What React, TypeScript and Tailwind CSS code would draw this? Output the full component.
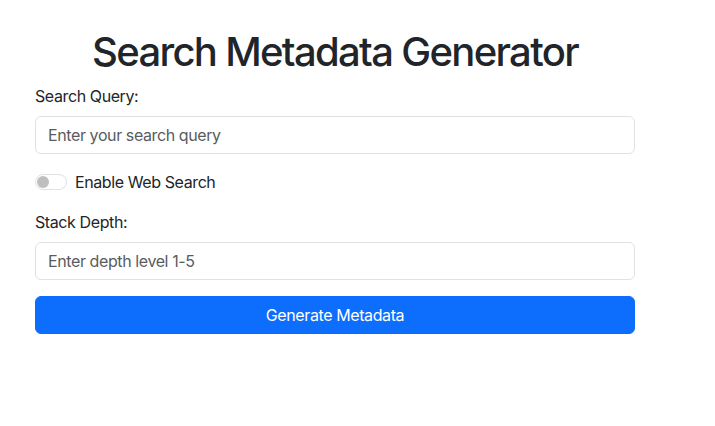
import React from "react";

export default function App() {
  return (
    <div className="min-h-screen bg-white text-[#212529] tracking-[-0.025em]" style={{ fontFamily: "Inter, 'Noto Sans', sans-serif" }}>
      <div className="ml-[35px] w-[600px] pt-[28px]">
        <h1 className="mb-2 text-center text-[40px] font-medium leading-[48px] tracking-[-0.042em]">Search Metadata Generator</h1>
        <div className="mb-4">
          <label className="mb-2 block text-base leading-6">Search Query:</label>
          <input
            type="text"
            placeholder="Enter your search query"
            className="block h-[38px] w-full rounded-[6px] border border-[#dee2e6] px-3 text-base leading-6 tracking-[-0.025em] outline-none placeholder:text-[#595c5f]"
          />
        </div>
        <div className="mb-4 flex min-h-6 items-center">
          <span className="relative mr-2 inline-block h-4 w-8 rounded-full border border-[#dee2e6] bg-white">
            <span className="absolute left-[1px] top-[1px] h-3 w-3 rounded-full bg-[#bfbfbf]" />
          </span>
          <span className="text-base leading-6">Enable Web Search</span>
        </div>
        <div className="mb-4">
          <label className="mb-2 block text-base leading-6">Stack Depth:</label>
          <input
            type="text"
            placeholder="Enter depth level 1-5"
            className="block h-[38px] w-full rounded-[6px] border border-[#dee2e6] px-3 text-base leading-6 tracking-[-0.025em] outline-none placeholder:text-[#595c5f]"
          />
        </div>
        <button className="block h-[38px] w-full rounded-[6px] border border-[#0d6efd] bg-[#0d6efd] text-base leading-6 tracking-[-0.025em] text-white">
          Generate Metadata
        </button>
      </div>
    </div>
  );
}
